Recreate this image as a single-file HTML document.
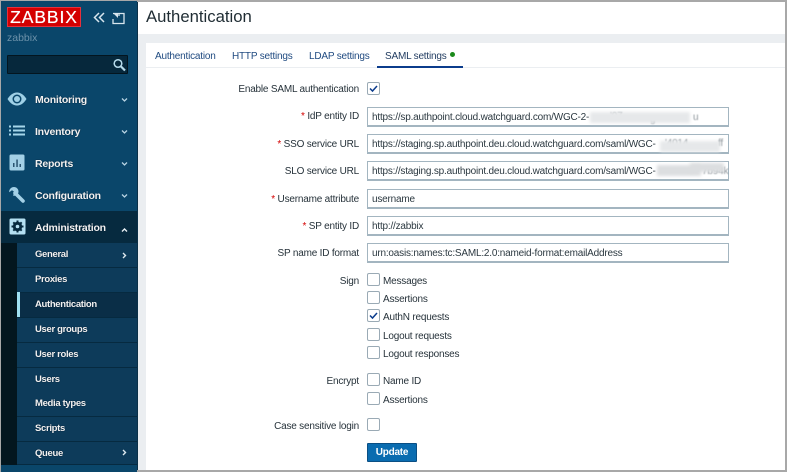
<!DOCTYPE html>
<html><head><meta charset="utf-8"><style>
html,body{margin:0;padding:0}
body{width:787px;height:472px;overflow:hidden;position:relative;background:#fff;font-family:"Liberation Sans",sans-serif;font-size:10px;letter-spacing:-.2px;line-height:13px;color:#1f2c33}
div,span,a{position:absolute;white-space:nowrap;box-sizing:border-box}
.m{left:35px;color:#f2f2f2;font-size:10.5px;font-weight:bold;letter-spacing:-.23px;line-height:14px;text-shadow:0 0 1px #012}
.s{left:17px;width:120px;height:25px;background:#0d3b5a;border-bottom:1px solid #062a40}
.s span{left:18px;top:5px;color:#f2f2f2;font-size:9.5px;line-height:14px;font-weight:bold;letter-spacing:-.33px;text-shadow:0 0 1px #012}
.l{right:428px;text-align:right;color:#26323a}
.r{color:#d40000}
.i{left:367px;width:362px;height:20px;border:1px solid #a3b5c0;border-bottom-width:2px;padding:3px 4px;color:#2b3840;background:#fff;overflow:hidden;line-height:13px}
.c{left:367px;width:13px;height:13px;border:1px solid #9aaab5;border-radius:2px;background:#fff}
.t{left:383px;color:#26323a}
.tab{top:50px;color:#1f4a80}
.b{background:#e6e8ea;filter:blur(1.5px);height:11px}
.f{color:#8a9298;filter:blur(.4px)}
</style></head><body>
<div style="left:0;top:0;width:787px;height:2px;background:#a8a8a8"></div>
<div style="left:137px;top:34px;width:650px;height:438px;background:#ebeef1"></div>
<div style="left:146px;top:43px;width:640px;height:429px;background:#fff"></div>
<div style="left:146px;top:67px;width:640px;height:1px;background:#ebeef1"></div>
<div style="left:137px;top:2px;width:1px;height:470px;background:#0b3048"></div>

<!-- sidebar -->
<div style="left:1px;top:1px;width:136px;height:471px;background:#0a466a"></div>
<div style="left:0;top:0;width:1px;height:472px;background:#a8a8a8"></div>
<div style="left:7px;top:7px;width:74px;height:20px;background:#d40000;color:#fff;font-size:17.5px;line-height:19px;text-align:center;letter-spacing:.9px;border:1px solid #e8303c;text-shadow:0 0 .5px #fff">ZABBIX</div>
<div style="left:7px;top:32px;color:#6d92aa;font-size:10.5px;letter-spacing:0">zabbix</div>
<svg style="position:absolute;left:92px;top:10px" width="36" height="16" fill="none" stroke="#d8e6ee" stroke-width="1.500"><path d="M7 3L2.500 7.500L7 12M12 3L7.500 7.500L12 12"/><path stroke-width="1.300" d="M21 3.500H32V13.500H21V9M25 3.500H27V6"/><path fill="#d8e6ee" stroke="none" d="M21 3L26 3L26 8Z"/></svg>
<div style="left:7px;top:55px;width:121px;height:19px;background:#06283c;border:1px solid #03151f;border-radius:1px"></div>
<svg style="position:absolute;left:111px;top:57px" width="16" height="16" fill="none" stroke="#b7dcec"><circle cx="7" cy="6.500" r="3.800" stroke-width="1.500"/><path stroke-width="2.200" d="M10 9.500L14 13.500"/></svg>

<svg style="position:absolute;left:7px;top:90px" width="20" height="18"><path fill="#9fd0e6" d="M.5 9C4 3.500 7.500 2.500 10 2.500S16 3.500 19.500 9C16 14.500 12.500 15.500 10 15.500S4 14.500 .5 9Z"/><circle cx="10" cy="9" r="4.500" fill="#0a466a"/><circle cx="10" cy="9" r="3" fill="#9fd0e6"/></svg>
<div class="m" style="top:93px">Monitoring</div>
<svg style="position:absolute;left:9px;top:125px" width="17" height="12" fill="#a6d6ea"><rect x="0" y="0.500" width="2" height="2"/><rect x="0" y="4.500" width="2" height="2"/><rect x="0" y="8.500" width="2" height="2"/><rect x="4" y="0.500" width="12" height="2"/><rect x="4" y="4.500" width="12" height="2"/><rect x="4" y="8.500" width="12" height="2"/></svg>
<div class="m" style="top:125px">Inventory</div>
<svg style="position:absolute;left:9px;top:154px" width="16" height="17"><rect x="0.500" y="0.500" width="15" height="16" rx="1.500" fill="#a3d0e6"/><path fill="#2a5470" d="M4 9h1.500v4H4zM7.300 5.500h1.500V13H7.300zM10.500 10h1.500v3h-1.500z"/></svg>
<div class="m" style="top:157px">Reports</div>
<svg style="position:absolute;left:8px;top:186px" width="18" height="18"><path fill="none" stroke="#a3d0e6" stroke-width="3.600" stroke-linecap="round" d="M7 7L15 15"/><path fill="#a3d0e6" d="M6 1C3.200 1 1 3.200 1.200 6.200L4 4.200L6.500 6L5 9.500C7.800 10.500 10.500 8.500 10.500 5.500C10.500 3 8.500 1 6 1Z"/></svg>
<div class="m" style="top:189px">Configuration</div>
<div style="left:1px;top:211px;width:136px;height:32px;background:#062a3f"></div>
<svg style="position:absolute;left:9px;top:218px" width="17" height="17"><rect x=".5" y=".5" width="16" height="16" rx="1.500" fill="#b5e0f2"/><circle cx="8.500" cy="8.500" r="4.700" fill="#062a3f"/><path stroke="#062a3f" stroke-width="2" d="M8.500 2.500v12M2.500 8.500h12M4.300 4.300l8.400 8.400M4.300 12.700l8.400-8.400"/><circle cx="8.500" cy="8.500" r="1.800" fill="#b5e0f2"/></svg>
<div class="m" style="top:221px">Administration</div>
<svg style="position:absolute;left:120px;top:95px" width="10" height="120" fill="none" stroke="#b7d3e2" stroke-width="1.300"><path d="M2 3.500L4.500 6L7 3.500M2 35.500L4.500 38L7 35.500M2 67.500L4.500 70L7 67.500M2 99.500L4.500 102L7 99.500"/></svg>
<svg style="position:absolute;left:120px;top:226px" width="10" height="8" fill="none" stroke="#e8f0f5" stroke-width="1.400"><path d="M2 5.500L4.500 3L7 5.500"/></svg>

<div style="left:1px;top:243px;width:16px;height:222px;background:#03161f"></div>
<div class="s" style="top:243px"><span>General</span></div>
<div class="s" style="top:268px"><span>Proxies</span></div>
<div class="s" style="top:293px;background:#0a2e47"><span>Authentication</span></div>
<div style="left:17px;top:292px;width:3px;height:25px;background:#9fe0f2"></div>
<div class="s" style="top:318px"><span>User groups</span></div>
<div class="s" style="top:343px"><span>User roles</span></div>
<div class="s" style="top:368px"><span>Users</span></div>
<div class="s" style="top:392px"><span>Media types</span></div>
<div class="s" style="top:417px"><span>Scripts</span></div>
<div class="s" style="top:442px;height:23px"><span>Queue</span></div>
<svg style="position:absolute;left:120px;top:251px" width="10" height="10" fill="none" stroke="#dde8ee" stroke-width="1.400"><path d="M3 2L5.500 4.500L3 7"/></svg>
<svg style="position:absolute;left:120px;top:448px" width="10" height="10" fill="none" stroke="#dde8ee" stroke-width="1.400"><path d="M3 2L5.500 4.500L3 7"/></svg>

<!-- main -->
<div style="left:146px;top:7px;font-size:16.7px;line-height:20px;color:#1f2c33;letter-spacing:0">Authentication</div>
<div class="tab" style="left:155px">Authentication</div>
<div class="tab" style="left:232px">HTTP settings</div>
<div class="tab" style="left:309px">LDAP settings</div>
<div class="tab" style="left:385px;color:#1f3a5f">SAML settings</div>
<div style="left:450px;top:52px;width:5px;height:5px;border-radius:50%;background:#1b8a1b"></div>
<div style="left:377px;top:66px;width:86px;height:2px;background:#0b3c8c"></div>

<div class="l" style="top:83px">Enable SAML authentication</div>
<div class="c" style="top:82px"></div>
<div class="l" style="top:110px"><span class="r" style="position:static">*</span> IdP entity ID</div>
<div class="i" style="top:107px">https://sp.authpoint.cloud.watchguard.com/WGC-2-</div>
<div class="f" style="left:610px;top:110px">'07</div>
<div class="f" style="left:650px;top:113px">g</div>
<div class="f" style="left:693px;top:111px">u</div>
<div class="b" style="left:590px;top:112px;width:100px"></div>
<div class="l" style="top:138px"><span class="r" style="position:static">*</span> SSO service URL</div>
<div class="i" style="top:134px">https://staging.sp.authpoint.deu.cloud.watchguard.com/saml/WGC-</div>
<div class="f" style="left:665px;top:137px">'4014</div>
<div class="f" style="left:718px;top:137px">ff</div>
<div class="b" style="left:660px;top:141px;width:60px"></div>
<div class="l" style="top:165px">SLO service URL</div>
<div class="i" style="top:161px">https://staging.sp.authpoint.deu.cloud.watchguard.com/saml/WGC-</div>
<div class="f" style="left:702px;top:165px">7b94k</div>
<div class="b" style="left:657px;top:165px;width:44px;background:#dcdee0"></div>
<div class="b" style="left:690px;top:163px;width:34px;height:9px;background:#dcdee0"></div>
<div class="l" style="top:193px"><span class="r" style="position:static">*</span> Username attribute</div>
<div class="i" style="top:189px">username</div>
<div class="l" style="top:220px"><span class="r" style="position:static">*</span> SP entity ID</div>
<div class="i" style="top:216px">http://zabbix</div>
<div class="l" style="top:247px">SP name ID format</div>
<div class="i" style="top:243px">urn:oasis:names:tc:SAML:2.0:nameid-format:emailAddress</div>

<div class="l" style="top:275px">Sign</div>
<div class="c" style="top:273px"></div><div class="t" style="top:275px">Messages</div>
<div class="c" style="top:291px"></div><div class="t" style="top:293px">Assertions</div>
<div class="c" style="top:309px"></div><div class="t" style="top:311px">AuthN requests</div>
<div class="c" style="top:328px"></div><div class="t" style="top:330px">Logout requests</div>
<div class="c" style="top:346px"></div><div class="t" style="top:348px">Logout responses</div>
<div class="l" style="top:375px">Encrypt</div>
<div class="c" style="top:373px"></div><div class="t" style="top:375px">Name ID</div>
<div class="c" style="top:392px"></div><div class="t" style="top:394px">Assertions</div>
<div class="l" style="top:420px">Case sensitive login</div>
<div class="c" style="top:418px"></div>
<svg style="position:absolute;left:367px;top:82px" width="13" height="13" fill="none" stroke="#0b3c8c" stroke-width="1.500"><path d="M3 6.500L5.500 9L10 4"/></svg>
<svg style="position:absolute;left:367px;top:309px" width="13" height="13" fill="none" stroke="#0b3c8c" stroke-width="1.500"><path d="M3 6.500L5.500 9L10 4"/></svg>
<div style="left:367px;top:443px;width:50px;height:19px;background:#0a6cb0;border:1px solid #0a4f84;border-radius:1px;color:#fff;font-weight:bold;font-size:10px;line-height:18px;text-align:center;letter-spacing:-.25px">Update</div>

<div style="left:785px;top:0;width:2px;height:472px;background:#a8a8a8"></div>
<div style="left:137px;top:470px;width:650px;height:2px;background:#a8a8a8"></div>
</body></html>
